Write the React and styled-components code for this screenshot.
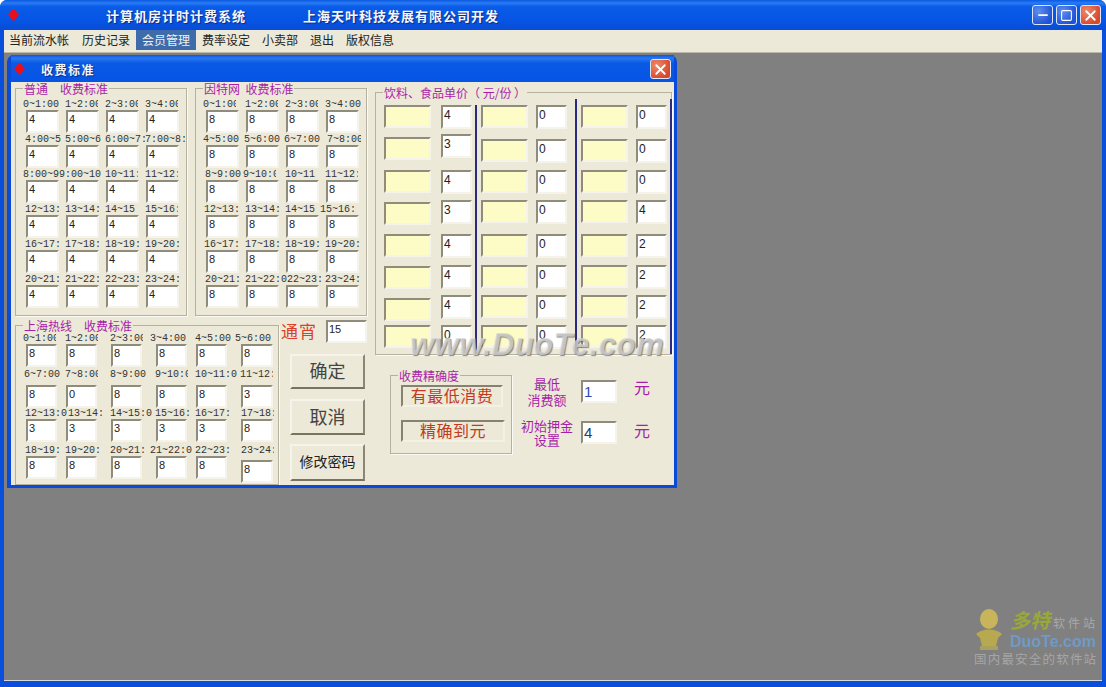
import React from "react";
import styled, { createGlobalStyle } from "styled-components";
import { Minus, Square, X } from "lucide-react";

const cjk = '"Noto Sans CJK SC", "Liberation Sans", sans-serif';
const mono = '"Liberation Mono", "Noto Sans CJK SC", monospace';

// [label, clip width, left nudge]
const normalRows = [
    [["0~1:00", 36, -3], ["1~2:00", 33, -1], ["2~3:00", 33, -1], ["3~4:00", 33, -1]],
    [["4:00~5", 36, -1], ["5:00~6", 36, -1], ["6:00~7:", 40, -1], ["7:00~8:", 40, -1]],
    [["8:00~9", 37, -3], ["9:00~10", 42, -7], ["10~11:", 33, -1], ["11~12:", 33, -1]],
    [["12~13:", 38, -1], ["13~14:", 36, -1], ["14~15", 33, -1], ["15~16:", 33, -1]],
    [["16~17:", 36, -1], ["17~18:", 36, -1], ["18~19:", 36, -1], ["19~20:", 36, -1]],
    [["20~21:", 36, -1], ["21~22:", 36, -1], ["22~23:", 36, -1], ["23~24:", 36, -1]],
];

const netRows = [
    [["0~1:00", 33, -3], ["1~2:00", 33, -1], ["2~3:00", 33, -1], ["3~4:00", 36, -1]],
    [["4~5:00", 36, -3], ["5~6:00", 36, -2], ["6~7:00", 36, -2], ["7~8:00", 34, 1]],
    [["8~9:00", 36, -1], ["9~10:00", 33, -3], ["10~11", 33, -1], ["11~12:", 33, -1]],
    [["12~13:", 36, -2], ["13~14:", 36, -1], ["14~15", 33, -1], ["15~16:", 36, -6]],
    [["16~17:", 36, -2], ["17~18:", 36, -1], ["18~19:", 36, -1], ["19~20:", 36, -1]],
    [["20~21:", 36, -1], ["21~22:0", 42, -1], ["22~23:", 38, 1], ["23~24:", 36, -1]],
];

const hotlineWidths = [40, 45, 45, 40, 45, 40];
const hotlineRows = [
    { top: 0, labelGap: 0, cells: [["0~1:00", 33, -3, "8"], ["1~2:00", 33, -1, "8"], ["2~3:00", 33, -1, "8"], ["3~4:00", 36, -6, "8"], ["4~5:00", 36, -1, "8"], ["5~6:00", 36, -6, "8"]] },
    { top: 2, labelGap: 5, cells: [["6~7:00", 36, -2, "8"], ["7~8:00", 33, -1, "0"], ["8~9:00", 36, -1, "8"], ["9~10:00", 33, -1, "8"], ["10~11:0", 42, -1, "8"], ["11~12:", 33, -1, "3"]] },
    { top: 0, labelGap: 0, cells: [["12~13:0", 42, -1, "3"], ["13~14:", 36, 2, "3"], ["14~15:0", 42, -1, "3"], ["15~16:", 36, -1, "3"], ["16~17:", 36, -1, "3"], ["17~18:", 33, 0, "8"]] },
    { top: 3, labelGap: 0, cells: [["18~19:", 36, -1, "8"], ["19~20:", 36, -1, "8"], ["20~21:", 36, -1, "8"], ["21~22:0", 42, -6, "8"], ["22~23:", 36, -1, "8"], ["23~24:", 33, 0, "8", 4]] },
];

const foodColumns = [
    { values: ["4", "3", "4", "3", "4", "4", "4", "0"], yellow: [0, 32, 65, 97, 129, 161, 193, 220], tops: [0, 29, 65, 95, 129, 160, 190, 220], lineTop: 0, gap: 10, pad: 3 },
    { values: ["0", "0", "0", "0", "0", "0", "0", "0"], yellow: [0, 34, 65, 95, 129, 160, 190, 220], tops: [0, 34, 65, 95, 129, 160, 190, 220], lineTop: -6, gap: 8, pad: 8 },
    { values: ["0", "0", "0", "4", "2", "2", "2", "2"], yellow: [0, 34, 65, 95, 129, 160, 190, 220], tops: [0, 34, 65, 95, 129, 160, 190, 220], lineTop: -6, gap: 8, pad: 3 },
];

const menus = ["当前流水帐", "历史记录", "会员管理", "费率设定", "小卖部", "退出", "版权信息"];

const GlobalStyle = createGlobalStyle`
    html, body {
        margin: 0;
        padding: 0;
        overflow: hidden;
    }
    fieldset, legend {
        margin: 0;
    }
`;

const Frame = styled.div`
    width: 1106px;
    height: 687px;
    display: flex;
    flex-direction: column;
    box-sizing: border-box;
    border-radius: 7px 7px 0 0;
    background: #0a4fdc;
    font-family: ${cjk};
`;

const TitleBar = styled.div`
    height: 30px;
    flex: none;
    display: flex;
    align-items: center;
    padding: 0 5px 0 8px;
    border-radius: 7px 7px 0 0;
    background: linear-gradient(#0a58e0 0%, #2a7cf4 10%, #0a5ce8 22%, #0654e4 70%, #0a4cd4 100%);
`;

const Diamond = styled.span`
    width: ${(p) => p.$size}px;
    height: ${(p) => p.$size + 2}px;
    flex: none;
    background: #e8101c;
    clip-path: polygon(50% 0, 100% 50%, 50% 100%, 0 50%);
`;

const AppTitle = styled.span`
    color: #f6f6f6;
    font-size: 13px;
    font-weight: 700;
    letter-spacing: 1px;
    white-space: nowrap;
    margin-left: ${(p) => p.$left}px;
    text-shadow: 1px 1px 1px #0a2a8a;
`;

const WindowButtons = styled.div`
    display: flex;
    gap: 3px;
    margin-left: auto;
`;

const WindowButton = styled.div`
    box-sizing: border-box;
    width: 21px;
    height: 20px;
    display: flex;
    align-items: center;
    justify-content: center;
    color: #fff;
    border: 1px solid #dfe8fa;
    border-radius: 3px;
    background: ${(p) => (p.$danger ? "radial-gradient(circle at 30% 30%, #ee8a6a, #d8482a 75%)" : "radial-gradient(circle at 30% 30%, #5f8ef0, #1f52d6 75%)")};
`;

const Body = styled.div`
    flex: 1;
    min-height: 0;
    display: flex;
    flex-direction: column;
    margin: 0 4px 6px;
    border-bottom: 1px solid #d8d8e0;
`;

const MenuBar = styled.div`
    height: 22px;
    flex: none;
    display: flex;
    align-items: flex-start;
    background: #ece9d8;
    border-bottom: 1px solid #bcb9aa;
    box-sizing: content-box;
`;

const MenuItem = styled.div`
    box-sizing: border-box;
    height: 20px;
    display: flex;
    align-items: center;
    padding: 0 6px 2px;
    margin-left: ${(p) => p.$lead || 0}px;
    font-size: 12px;
    color: ${(p) => (p.$active ? "#f0f0f0" : "#222")};
    background: ${(p) => (p.$active ? "#3e6cab" : "transparent")};
`;

const Mdi = styled.div`
    position: relative;
    flex: 1;
    min-height: 0;
    padding: 2px 3px;
    background: #808080;
`;

const Dialog = styled.div`
    position: relative;
    width: 670px;
    height: 433px;
    box-sizing: border-box;
    display: flex;
    flex-direction: column;
    padding: 0 3px 3px 4px;
    border-radius: 7px 7px 0 0;
    background: #0a4ad8;
`;

const DialogTitle = styled.div`
    height: 27px;
    flex: none;
    display: flex;
    align-items: center;
    padding: 1px 3px 0 3px;
    box-sizing: border-box;
    background: linear-gradient(#0a56e2 0%, #2a78f0 12%, #0a5ae6 30%, #0654e4 100%);
`;

const DialogName = styled.span`
    color: #f4f4f4;
    font-size: 12px;
    font-weight: 700;
    letter-spacing: 1.5px;
    margin-left: 16px;
    text-shadow: 1px 1px 1px #0a2a8a;
`;

const CloseButton = styled(WindowButton)`
    margin-left: auto;
`;

const Client = styled.div`
    flex: 1;
    min-height: 0;
    overflow: hidden;
    display: flex;
    gap: 8px;
    padding-left: 4px;
    background: #ece9d8;
`;

const LeftColumn = styled.div`
    width: 352px;
    flex: none;
    display: flex;
    flex-direction: column;
`;

const RightColumn = styled.div`
    width: 297px;
    flex: none;
    padding-top: 4px;
`;

const TopGroups = styled.div`
    display: flex;
    gap: 8px;
`;

const BottomGroups = styled.div`
    display: flex;
    margin-top: 3px;
`;

const Group = styled.fieldset`
    box-sizing: border-box;
    flex: none;
    min-width: 0;
    width: ${(p) => p.$w}px;
    height: ${(p) => p.$h}px;
    padding: ${(p) => p.$pad};
    border: 1px solid #b4b1a0;
    box-shadow: 1px 1px 0 #fbfaf4;
`;

const Legend = styled.legend`
    margin-left: ${(p) => p.$left}px;
    padding: 0 1px;
    height: 12px;
    line-height: 14px;
    font-size: 12px;
    white-space: pre;
    color: #a81ea8;
`;

const CellRow = styled.div`
    display: flex;
    margin-top: ${(p) => p.$top || 0}px;
`;

const Cell = styled.div`
    width: ${(p) => p.$w}px;
    flex: none;
    display: flex;
    flex-direction: column;
`;

const TimeLabel = styled.div`
    height: 11px;
    line-height: 12px;
    width: ${(p) => p.$clip}px;
    margin-left: ${(p) => p.$nudge}px;
    margin-bottom: ${(p) => p.$gap || 0}px;
    overflow: hidden;
    white-space: nowrap;
    font-family: ${mono};
    font-size: 10px;
    color: #333;
`;

const Field = styled.div`
    box-sizing: border-box;
    flex: none;
    width: ${(p) => p.$w}px;
    height: ${(p) => p.$h || 23}px;
    margin-top: ${(p) => p.$top || 0}px;
    padding-left: 1px;
    border: 2px solid;
    border-color: #8f8c7c #f5f3ea #f5f3ea #8f8c7c;
    background: ${(p) => p.$bg || "#fff"};
    color: ${(p) => p.$color || "#222"};
    font-family: "Liberation Sans", sans-serif;
    font-size: ${(p) => p.$size || 11}px;
    line-height: ${(p) => (p.$size ? p.$size + 4 : 14)}px;
`;

const SidePanel = styled.div`
    flex: 1;
    display: flex;
    flex-direction: column;
    padding-top: 1px;
`;

const AllNightRow = styled.div`
    display: flex;
    align-items: center;
    height: 23px;
    padding-left: 2px;
`;

const AllNightLabel = styled.span`
    width: 45px;
    padding-bottom: 3px;
    font-size: 17px;
    letter-spacing: 1px;
    color: #d8402a;
`;

const ActionButton = styled.div`
    box-sizing: border-box;
    width: 75px;
    height: ${(p) => p.$h}px;
    margin: ${(p) => p.$top}px 0 0 11px;
    padding-bottom: 3px;
    display: flex;
    align-items: center;
    justify-content: center;
    border: 2px solid;
    border-color: #f6f4ea #8a8776 #77745f #f6f4ea;
    background: #ece9d8;
    color: ${(p) => p.$color};
    font-size: ${(p) => p.$size}px;
`;

const FoodBody = styled.div`
    height: 249px;
    display: flex;
`;

const FoodColumn = styled.div`
    flex: none;
    display: flex;
    gap: ${(p) => p.$gap}px;
    padding-right: ${(p) => p.$pad}px;
`;

const FoodStack = styled.div`
    display: flex;
    flex-direction: column;
`;

const FoodLine = styled.div`
    width: 2px;
    flex: none;
    margin: ${(p) => p.$top}px 4px 0 0;
    background: #2a2a80;
`;

const LowerRight = styled.div`
    display: flex;
    margin-top: 14px;
    padding-left: 15px;
`;

const PrecisionState = styled.div`
    box-sizing: border-box;
    width: ${(p) => p.$w}px;
    height: 22px;
    margin-bottom: 13px;
    padding-bottom: 3px;
    display: flex;
    align-items: center;
    justify-content: center;
    border: 2px solid;
    border-color: #85826f #f3f1e6 #f3f1e6 #85826f;
    color: #c23a22;
    font-size: 16px;
    letter-spacing: 0.5px;
`;

const DepositPanel = styled.div`
    display: flex;
    flex-direction: column;
    gap: 18px;
    margin: 11px 0 0 4px;
`;

const DepositRow = styled.div`
    display: flex;
    align-items: center;
    height: 23px;
`;

const DepositCaption = styled.div`
    width: 62px;
    margin-right: 3px;
    flex: none;
    text-align: center;
    font-size: 13px;
    line-height: ${(p) => p.$lh}px;
    color: #a81ea8;
`;

const Yuan = styled.span`
    margin: 0 0 ${(p) => p.$lift}px 17px;
    font-size: 16px;
    color: #a81ea8;
`;

const SiteMark = styled.div`
    position: absolute;
    left: 403px;
    top: 272px;
    font-family: "Liberation Sans", sans-serif;
    font-size: 31px;
    font-style: italic;
    font-weight: 700;
    letter-spacing: 0.5px;
    white-space: nowrap;
    color: rgba(215, 215, 215, 0.75);
    text-shadow: 1px 1px 1px rgba(90, 90, 90, 0.7);
`;

const Logo = styled.div`
    position: absolute;
    right: 0;
    bottom: 12px;
    width: 128px;
    display: grid;
    grid-template-columns: 36px 1fr;
    align-items: center;
    color: #a4a4a4;
`;

const LogoBrand = styled.div`
    line-height: 22px;
    font-size: 20px;
    font-weight: 700;
    font-style: italic;
    white-space: nowrap;
    color: #9aa83a;
`;

const LogoSmall = styled.span`
    margin-left: 3px;
    font-size: 12px;
    font-style: normal;
    font-weight: 400;
    letter-spacing: 3px;
    color: #a8a8a8;
`;

const LogoDomain = styled.div`
    line-height: 16px;
    font-family: "Liberation Sans", sans-serif;
    font-size: 16px;
    font-weight: 700;
    color: #6f9ac4;
`;

const LogoSlogan = styled.div`
    grid-column: 1 / 3;
    line-height: 18px;
    font-size: 12.5px;
    letter-spacing: 1.2px;
    white-space: nowrap;
    color: #a6a6a6;
`;

const TimeGrid = ({ rows, value }) => (
    <>
        {rows.map((row, i) => (
            <CellRow key={i} $top={i ? 1 : 0}>
                {row.map(([label, clip, nudge]) => (
                    <Cell key={label} $w={40}>
                        <TimeLabel $clip={clip} $nudge={nudge}>{label}</TimeLabel>
                        <Field $w={33}>{value}</Field>
                    </Cell>
                ))}
            </CellRow>
        ))}
    </>
);

const Stack = ({ tops, values, width, height, bg }) => (
    <FoodStack>
        {tops.map((top, i) => (
            <Field key={i} $w={width} $h={height} $bg={bg} $top={i ? top - tops[i - 1] - height : 0} $size={12}>
                {values ? values[i] : ""}
            </Field>
        ))}
    </FoodStack>
);

const App = () => {
    return (
        <Frame>
            <GlobalStyle />
            <TitleBar>
                <Diamond $size={11} />
                <AppTitle $left={87}>计算机房计时计费系统</AppTitle>
                <AppTitle $left={57}>上海天叶科技发展有限公司开发</AppTitle>
                <WindowButtons>
                    <WindowButton><Minus size={14} strokeWidth={3} /></WindowButton>
                    <WindowButton><Square size={13} strokeWidth={2} /></WindowButton>
                    <WindowButton $danger><X size={17} strokeWidth={2.5} /></WindowButton>
                </WindowButtons>
            </TitleBar>
            <Body>
                <MenuBar>
                    {menus.map((name, i) => (
                        <MenuItem key={name} $active={name === "会员管理"} $lead={[-1, 1, 0, 0, 0, 0, 0][i]}>{name}</MenuItem>
                    ))}
                </MenuBar>
                <Mdi>
                    <Dialog>
                        <DialogTitle>
                            <Diamond $size={11} />
                            <DialogName>收费标准</DialogName>
                            <CloseButton $danger><X size={17} strokeWidth={2.5} /></CloseButton>
                        </DialogTitle>
                        <Client>
                            <LeftColumn>
                                <TopGroups>
                                    <Group $w={172} $h={234} $pad="5px 0 0 10px">
                                        <Legend $left={-3}>{"普通　收费标准"}</Legend>
                                        <TimeGrid rows={normalRows} value="4" />
                                    </Group>
                                    <Group $w={172} $h={234} $pad="5px 0 0 10px">
                                        <Legend $left={-3}>{"因特网  收费标准"}</Legend>
                                        <TimeGrid rows={netRows} value="8" />
                                    </Group>
                                </TopGroups>
                                <BottomGroups>
                                    <Group $w={264} $h={166} $pad="2px 0 0 10px">
                                        <Legend $left={-3}>{"上海热线　收费标准"}</Legend>
                                        {hotlineRows.map((row, i) => (
                                            <CellRow key={i} $top={row.top}>
                                                {row.cells.map(([label, clip, nudge, value, drop], j) => (
                                                    <Cell key={label} $w={hotlineWidths[j]}>
                                                        <TimeLabel $clip={clip} $nudge={nudge} $gap={row.labelGap}>{label}</TimeLabel>
                                                        <Field $w={j === 5 ? 32 : 31} $top={drop}>{value}</Field>
                                                    </Cell>
                                                ))}
                                            </CellRow>
                                        ))}
                                    </Group>
                                    <SidePanel>
                                        <AllNightRow>
                                            <AllNightLabel>通宵</AllNightLabel>
                                            <Field $w={41}>15</Field>
                                        </AllNightRow>
                                        <ActionButton $h={35} $top={11} $size={18} $color="#444">确定</ActionButton>
                                        <ActionButton $h={36} $top={10} $size={18} $color="#444">取消</ActionButton>
                                        <ActionButton $h={37} $top={9} $size={14} $color="#222">修改密码</ActionButton>
                                    </SidePanel>
                                </BottomGroups>
                            </LeftColumn>
                            <RightColumn>
                                <Group $w={297} $h={269} $pad="7px 0 0 8px">
                                    <Legend $left={-1}>饮料、食品单价（ 元/份 ）</Legend>
                                    <FoodBody>
                                        {foodColumns.map((col, i) => (
                                            <React.Fragment key={i}>
                                                <FoodColumn $gap={col.gap} $pad={col.pad}>
                                                    <Stack tops={col.yellow} width={47} height={23} bg="#fdfbc6" />
                                                    <Stack tops={col.tops} values={col.values} width={31} height={24} />
                                                </FoodColumn>
                                                <FoodLine $top={col.lineTop} />
                                            </React.Fragment>
                                        ))}
                                    </FoodBody>
                                </Group>
                                <LowerRight>
                                    <Group $w={122} $h={85} $pad="4px 0 0 10px">
                                        <Legend $left={-3}>收费精确度</Legend>
                                        <PrecisionState $w={102}>有最低消费</PrecisionState>
                                        <PrecisionState $w={104}>精确到元</PrecisionState>
                                    </Group>
                                    <DepositPanel>
                                        <DepositRow>
                                            <DepositCaption $lh={16}>最低<br />消费额</DepositCaption>
                                            <Field $w={36} $size={15} $color="#2a4ab8">1</Field>
                                            <Yuan $lift={10}>元</Yuan>
                                        </DepositRow>
                                        <DepositRow>
                                            <DepositCaption $lh={14}>初始押金<br />设置</DepositCaption>
                                            <Field $w={36} $size={15} $color="#2a3a6a">4</Field>
                                            <Yuan $lift={6}>元</Yuan>
                                        </DepositRow>
                                    </DepositPanel>
                                </LowerRight>
                            </RightColumn>
                        </Client>
                        <SiteMark>www.DuoTe.com</SiteMark>
                    </Dialog>
                    <Logo>
                        <svg width="30" height="42" viewBox="0 0 30 42">
                            <ellipse cx="15" cy="11" rx="9" ry="10" fill="#c8b45a" />
                            <path d="M2 26 C8 20 22 20 28 26 L24 30 L22 38 L8 38 L6 30 Z" fill="#b8a850" />
                            <rect x="6" y="38" width="18" height="4" fill="#a8a060" />
                        </svg>
                        <div>
                            <LogoBrand>多特<LogoSmall>软件站</LogoSmall></LogoBrand>
                            <LogoDomain>DuoTe.com</LogoDomain>
                        </div>
                        <LogoSlogan>国内最安全的软件站</LogoSlogan>
                    </Logo>
                </Mdi>
            </Body>
        </Frame>
    );
};

export default App;
